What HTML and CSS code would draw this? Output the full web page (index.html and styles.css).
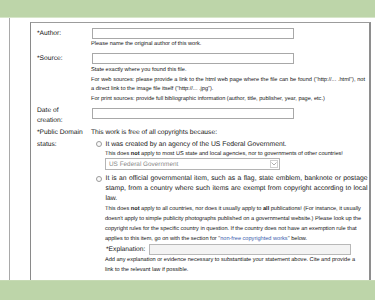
FILE: index.html
```html
<!DOCTYPE html>
<html lang="en">
<head>
    <meta charset="UTF-8">
    <meta name="viewport" content="width=device-width, initial-scale=1.0">
    <title>Upload file</title>
    <link rel="stylesheet" href="styles.css">
</head>
<body>
    <div class="band band-top"></div>

    <div class="page">
        <div class="rail"></div>

        <form class="form-box">
            <div class="row row-author">
                <label class="label" for="author">*Author:</label>
                <div class="field">
                    <input class="text-input" type="text" id="author">
                    <p class="help help-author">Please name the original author of this work.</p>
                </div>
            </div>

            <div class="row row-source">
                <label class="label" for="source">*Source:</label>
                <div class="field">
                    <input class="text-input" type="text" id="source">
                    <p class="help help-source">State exactly where you found this file.<br>
                    For web sources: please provide a link to the html web page where the file can be found ("http://... .html"), not a direct link to the image file itself ("http://... .jpg").<br>
                    For print sources: provide full bibliographic information (author, title, publisher, year, page, etc.)</p>
                </div>
            </div>

            <div class="row row-date">
                <label class="label label-two" for="date">Date of<br>creation:</label>
                <div class="field">
                    <input class="text-input input-date" type="text" id="date">
                </div>
            </div>

            <div class="row row-status">
                <div class="label label-status">*Public Domain<br>status:</div>
                <div class="field">
                    <p class="lead">This work is free of all copyrights because:</p>

                    <div class="option option-first">
                        <span class="radio"></span>
                        <span class="option-text">It was created by an agency of the US Federal Government.</span>
                    </div>
                    <p class="note note-first">This does <b>not</b> apply to most US state and local agencies, nor to governments of other countries!</p>
                    <div class="select">
                        <span class="select-value">US Federal Government</span>
                        <span class="select-arrow">
                            <svg width="6" height="4" viewBox="0 0 6 4"><path d="M0.5 0.5 L3 3 L5.5 0.5" fill="none" stroke="#9a9a9a" stroke-width="0.8"/></svg>
                        </span>
                    </div>

                    <div class="option option-second">
                        <span class="radio"></span>
                        <span class="option-text">It is an official governmental item, such as a flag, state emblem, banknote or postage stamp, from a country where such items are exempt from copyright according to local law.</span>
                    </div>
                    <p class="note note-second">This does <b>not</b> apply to all countries, nor does it usually apply to <b>all</b> publications! (For instance, it usually doesn't apply to simple publicity photographs published on a governmental website.) Please look up the copyright rules for the specific country in question. If the country does not have an exemption rule that applies to this item, go on with the section for "<a href="#" class="link">non-free copyrighted works</a>" below.</p>

                    <div class="explain">
                        <label class="explain-label" for="explain">*Explanation:</label>
                        <input class="text-input input-explain" type="text" id="explain">
                    </div>
                    <p class="help help-explain">Add any explanation or evidence necessary to substantiate your statement above. Cite and provide a link to the relevant law if possible.</p>

                    <div class="option option-third">
                        <span class="radio"></span>
                        <span class="option-text">It is a simple design or logo that consists only of simple geometry or typefaces.</span>
                    </div>
                </div>
            </div>
        </form>
    </div>

    <div class="band band-bottom"></div>
</body>
</html>
```

FILE: styles.css
```css
body {
    margin: 0;
    height: 300px;
    overflow: hidden;
    background-color: #fff;
    font-family: "Liberation Sans", Arial, sans-serif;
    color: #161616;
    text-rendering: geometricPrecision;
}

.band {
    background-color: #bdd5a9;
}

.band-top {
    height: 17px;
    border-bottom: 1px solid #d7e6ca;
}

.band-bottom {
    height: 19px;
    border-top: 1px solid #c6dab4;
}

.page {
    display: flex;
    height: 262px;
    overflow: hidden;
    padding-left: 9px;
}

.rail {
    width: 1px;
    background-color: #a9a9a9;
}

.form-box {
    box-sizing: border-box;
    width: 341px;
    margin: 4px 0 0 20px;
    padding-left: 6px;
    border-top: 1px solid #9c9c9c;
    border-left: 1px solid #8a8a8a;
    border-right: 2px solid #8e8e8e;
}

.row {
    display: grid;
    grid-template-columns: 54px 1fr;
}

.label {
    font-size: 6.7px;
    line-height: 11px;
    white-space: nowrap;
}

.text-input {
    display: block;
    box-sizing: border-box;
    width: 202px;
    height: 11px;
    margin: 0 0 0 1px;
    padding: 0;
    border: 1px solid #a8a8a8;
    background-color: #fff;
}

.help,
.note {
    margin: 0;
    font-size: 5.6px;
    line-height: 9.5px;
}

.row-author {
    padding-top: 5px;
}

.help-author {
    margin-top: 1px;
}

.row-source {
    margin-top: 3.5px;
}

.help-source {
    width: 274px;
    margin-top: 2px;
    text-align: justify;
}

.row-date {
    margin-top: 2px;
}

.label-two {
    line-height: 10px;
}

.input-date {
    margin-top: 2px;
}

.row-status {
    margin-top: 1px;
}

.label-status {
    line-height: 11.5px;
}

.lead {
    margin: 0;
    font-size: 6.7px;
    line-height: 11.5px;
}

.option {
    display: flex;
    align-items: flex-start;
    font-size: 6.8px;
}

.option-text {
    flex: none;
    width: 262px;
    text-align: justify;
}

.option-first {
    line-height: 11px;
}

.option-second {
    margin-top: 4px;
    line-height: 10px;
}

.option-third {
    margin-top: 4px;
    line-height: 10px;
}

.radio {
    box-sizing: border-box;
    flex: none;
    width: 6px;
    height: 6px;
    margin: 2px 3.5px 0 5px;
    border: 1px solid #9b9b9b;
    border-radius: 50%;
    background-color: #fafafa;
}

.option-first .radio {
    margin-top: 2.5px;
}

.note {
    padding-left: 14px;
}

.note-first {
    line-height: 8px;
    white-space: nowrap;
}

.note-second {
    width: 257px;
    line-height: 10px;
}

.select {
    display: flex;
    align-items: center;
    box-sizing: border-box;
    width: 175px;
    height: 12px;
    margin: 0.5px 0 0 14px;
    padding: 0 1px 0 3px;
    border: 1px solid #b4b4b4;
    font-size: 6.4px;
    color: #8a8a8a;
}

.select-value {
    flex: 1;
}

.select-arrow {
    display: flex;
    align-items: center;
    justify-content: center;
    box-sizing: border-box;
    width: 8px;
    height: 8px;
    border: 1px solid #d0d0d0;
}

.explain {
    display: flex;
    align-items: center;
    padding-left: 15px;
}

.explain-label {
    width: 42px;
    font-size: 6.7px;
    line-height: 11px;
}

.input-explain {
    background-color: #f3f3f3;
    border-color: #b8b8b8;
}

.help-explain {
    width: 257px;
    margin-top: 1px;
    padding-left: 14px;
}

.link {
    color: #3a5cad;
    text-decoration: none;
}
```
